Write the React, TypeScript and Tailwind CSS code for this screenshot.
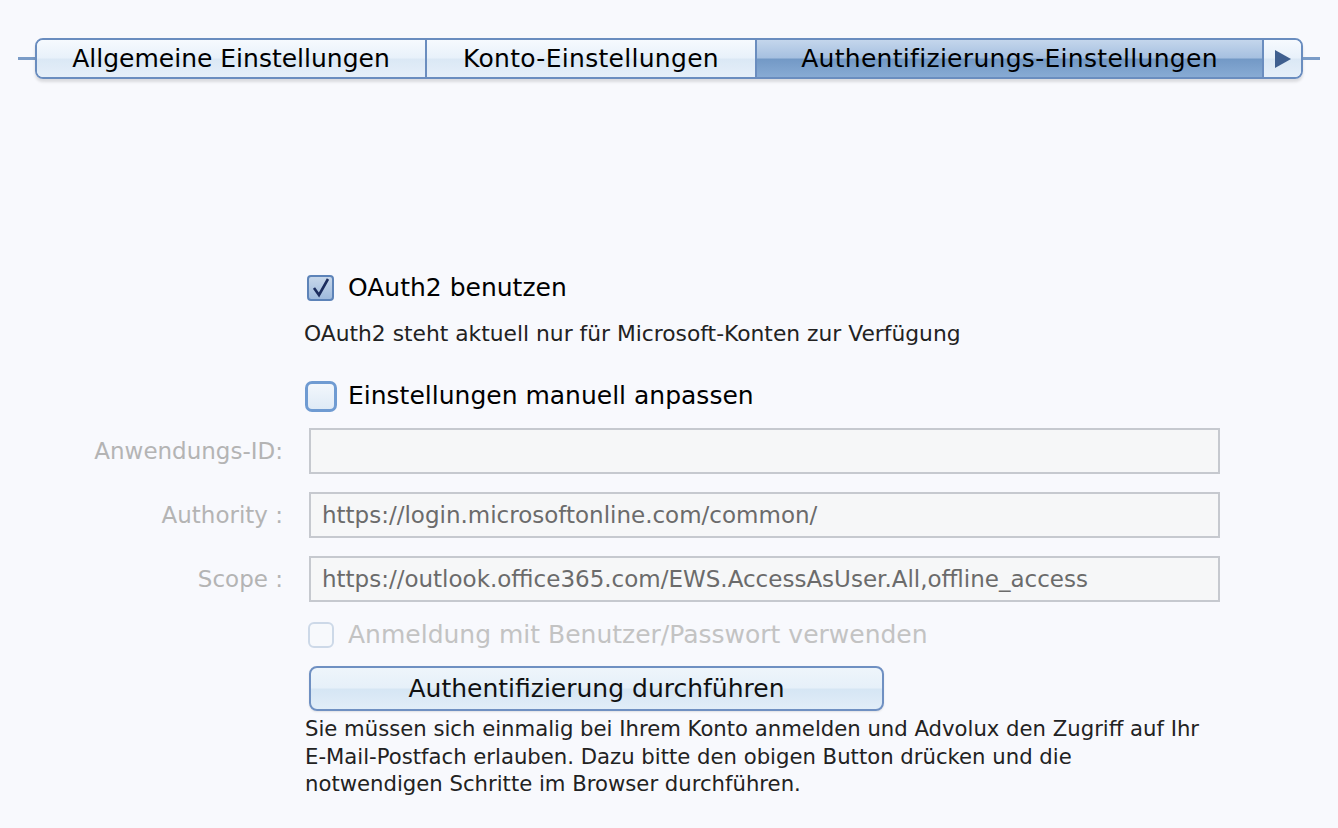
import React from "react";

const font = { fontFamily: '"DejaVu Sans", "Liberation Sans", sans-serif' };

function Tab({ label, w, selected, first }: { label: string; w: string; selected?: boolean; first?: boolean }) {
  return (
    <div
      className={`${w} h-full flex items-center justify-center text-[25px] text-black ${first ? "tracking-[0px]" : "tracking-[0.3px] border-l-2 border-[#6a8dbf]"} ${
        selected
          ? "bg-[linear-gradient(to_bottom,#c4d6ec_0%,#a6c0e0_48%,#7399c6_52%,#88abd4_100%)]"
          : "bg-[linear-gradient(to_bottom,#f6fafe_0%,#e8f1fa_48%,#dbe8f5_52%,#e5eff9_100%)]"
      }`}
    >
      {label}
    </div>
  );
}

function CheckBox({ checked, disabled }: { checked?: boolean; disabled?: boolean }) {
  if (disabled) {
    return <div className="w-[26px] h-[26px] rounded-[6px] border-2 border-[#cdd9e8] bg-[#f7f9fc]" />;
  }
  if (checked) {
    return (
      <div className="w-[27px] h-[26px] rounded-[4px] border-2 border-[#5d83b8] bg-[linear-gradient(to_bottom,#c7d7ea,#9fbadc)] flex items-center justify-center">
        <svg width="22" height="22" viewBox="0 0 22 22">
          <path d="M4 11 L9 18 L18 2" fill="none" stroke="#1c2d5e" strokeWidth="2.6" strokeLinejoin="miter" strokeLinecap="butt" />
        </svg>
      </div>
    );
  }
  return (
    <div className="w-[32px] h-[31px] rounded-[7px] border-[3px] border-[#6f9bd2] bg-[linear-gradient(to_bottom,#f2f7fc,#dfeaf6)]" />
  );
}

function Field({ label, value }: { label: string; value?: string }) {
  return (
    <div className="flex items-center">
      <div className="w-[283px] text-right text-[23px] text-[#b4b4b4] whitespace-nowrap">{label}</div>
      <div className="ml-[26px] w-[911px] h-[46px] border-2 border-[#c6c9cf] bg-[#f6f7f8] flex items-center pl-[11px] text-[23px] text-[#6b6b6b] whitespace-nowrap">
        {value}
      </div>
    </div>
  );
}

export default function App() {
  return (
    <div className="w-[1338px] h-[828px] bg-[#f8f9fd] overflow-hidden" style={font}>
      <div className="pt-[38px] flex items-center">
        <div className="w-[18px]" />
        <div className="w-[17px] h-[3px] bg-[#7b9cc7]" />
        <div className="flex h-[41px] rounded-[8px] border-2 border-[#6a8dbf] overflow-hidden shadow-[0_3px_3px_rgba(0,0,0,0.12)]">
          <Tab label="Allgemeine Einstellungen" w="w-[388px]" first />
          <Tab label="Konto-Einstellungen" w="w-[330px]" />
          <Tab label="Authentifizierungs-Einstellungen" w="w-[507px]" selected />
          <div className="w-[39px] h-full border-l-2 border-[#6a8dbf] bg-[linear-gradient(to_bottom,#f6fafe_0%,#e8f1fa_48%,#dbe8f5_52%,#e5eff9_100%)] flex items-center justify-center">
            <svg width="18" height="20" viewBox="0 0 18 20">
              <path d="M1 1 L17 10 L1 19 Z" fill="#3f5f8f" />
            </svg>
          </div>
        </div>
        <div className="w-[17px] h-[3px] bg-[#7b9cc7]" />
      </div>

      <div className="pl-[307px] mt-[195px] flex items-center gap-[14px] h-[28px]">
        <CheckBox checked />
        <span className="text-[25px] text-black">OAuth2 benutzen</span>
      </div>
      <div className="pl-[304px] mt-[20px] text-[21.8px] text-[#222] h-[24px] leading-[24px] whitespace-nowrap">
        OAuth2 steht aktuell nur für Microsoft-Konten zur Verfügung
      </div>
      <div className="pl-[305px] mt-[34px] flex items-center gap-[11px] h-[32px]">
        <CheckBox />
        <span className="text-[25px] text-black">Einstellungen manuell anpassen</span>
      </div>

      <div className="mt-[16px] flex flex-col gap-[18px]">
        <Field label="Anwendungs-ID:" />
        <Field label="Authority :" value="https://login.microsoftonline.com/common/" />
        <Field label="Scope :" value="https://outlook.office365.com/EWS.AccessAsUser.All,offline_access" />
      </div>

      <div className="pl-[308px] mt-[19px] flex items-center gap-[14px] h-[28px]">
        <CheckBox disabled />
        <span className="text-[25px] text-[#c3c3c3]">Anmeldung mit Benutzer/Passwort verwenden</span>
      </div>

      <div className="pl-[309px] mt-[17px]">
        <div className="w-[575px] h-[45px] rounded-[8px] border-2 border-[#6f90c2] bg-[linear-gradient(to_bottom,#eef5fb_0%,#e6f0f9_48%,#d6e6f4_52%,#e1edf8_100%)] flex items-center justify-center text-[25px] text-[#111] shadow-[0_1px_2px_rgba(0,0,0,0.1)]">
          Authentifizierung durchführen
        </div>
      </div>

      <div className="pl-[305px] mt-[4px] w-[1338px] text-[21.2px] leading-[27.5px] text-[#222] whitespace-nowrap">
        Sie müssen sich einmalig bei Ihrem Konto anmelden und Advolux den Zugriff auf Ihr
        <br />
        E-Mail-Postfach erlauben. Dazu bitte den obigen Button drücken und die
        <br />
        notwendigen Schritte im Browser durchführen.
      </div>
    </div>
  );
}
